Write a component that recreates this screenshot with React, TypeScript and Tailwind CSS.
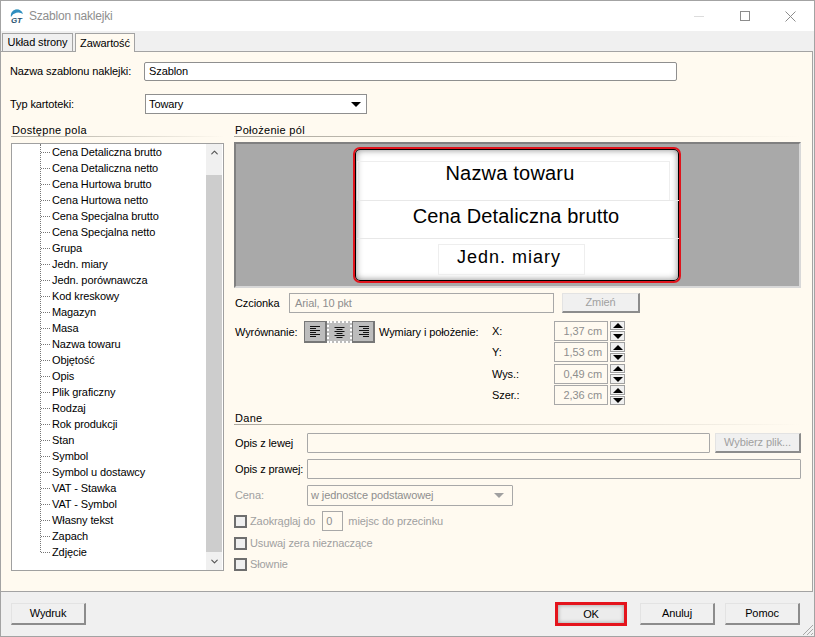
import { ChevronDown, ChevronUp } from 'lucide-react';

const FIELDS = [
  'Cena Detaliczna brutto', 'Cena Detaliczna netto', 'Cena Hurtowa brutto', 'Cena Hurtowa netto',
  'Cena Specjalna brutto', 'Cena Specjalna netto', 'Grupa', 'Jedn. miary', 'Jedn. porównawcza',
  'Kod kreskowy', 'Magazyn', 'Masa', 'Nazwa towaru', 'Objętość', 'Opis', 'Plik graficzny', 'Rodzaj',
  'Rok produkcji', 'Stan', 'Symbol', 'Symbol u dostawcy', 'VAT - Stawka', 'VAT - Symbol',
  'Własny tekst', 'Zapach', 'Zdjęcie',
];

const SIZES = [
  { label: 'X:', value: '1,37 cm' },
  { label: 'Y:', value: '1,53 cm' },
  { label: 'Wys.:', value: '0,49 cm' },
  { label: 'Szer.:', value: '2,36 cm' },
];

function Logo() {
  return (
    <svg width="16" height="16" viewBox="0 0 16 16" className="ml-[8px]">
      <path d="M2 9a6 6 0 0 1 12-3 8 8 0 0 0-12 3z" fill="#2f8fc0" />
      <path d="M3 4a6 6 0 0 1 8-2 7 7 0 0 0-8 2z" fill="#9cc" />
      <text x="2" y="15" fontSize="8" fontWeight="700" fontStyle="italic" fill="#24506e" fontFamily="Liberation Sans, sans-serif">GT</text>
    </svg>
  );
}

function BevelButton({ label, disabled, className }: { label: string; disabled?: boolean; className: string }) {
  return (
    <div
      className={`flex items-center justify-center bg-[#f0f0f0] border border-t-[#e3e3e3] border-l-[#e3e3e3] border-r-2 border-b-2 border-r-[#8c8c8c] border-b-[#8c8c8c] ${disabled ? 'text-[#a0a0a0]' : 'text-black'} ${className}`}
    >
      {label}
    </div>
  );
}

function Section({ title }: { title: string }) {
  return (
    <div>
      <div className="h-[12px] pl-[1px] leading-[12px] tracking-[0.3px] text-black">{title}</div>
      <div className="h-[1px] bg-gradient-to-r from-[#aaa69c] to-[#fffaf0]" />
    </div>
  );
}

function AlignIcon({ kind }: { kind: 'left' | 'center' | 'right' }) {
  const widths = [10, 6, 10, 6, 10, 6];
  return (
    <svg width="11" height="11" viewBox="0 0 11 11">
      {widths.map((w, i) => {
        const x = kind === 'left' ? 0 : kind === 'right' ? 11 - w : (11 - w) / 2;
        return <rect key={i} x={x} y={i * 2} width={w} height="1" fill="#111" />;
      })}
    </svg>
  );
}

function Spinner() {
  return (
    <div className="ml-[2px] w-[15px] h-[20px] flex flex-col gap-[1px] bg-white">
      <div className="h-[9.5px] flex-1 flex items-center justify-center bg-[#f0f0f0] border border-[#a0a0a0]">
        <div className="w-0 h-0 border-x-[5px] border-x-transparent border-b-[5px] border-b-black" />
      </div>
      <div className="h-[9.5px] flex-1 flex items-center justify-center bg-[#f0f0f0] border border-[#a0a0a0]">
        <div className="w-0 h-0 border-x-[5px] border-x-transparent border-t-[5px] border-t-black" />
      </div>
    </div>
  );
}

function Check({ label }: { label: string }) {
  return (
    <div className="flex items-center text-[#a0a0a0]">
      <div className="w-[13px] h-[13px] bg-[#efefef] border-2 border-[#6e6e6e]" />
      <span className="ml-[3px]">{label}</span>
    </div>
  );
}

export default function App() {
  return (
    <div
      className="w-[815px] h-[637px] flex flex-col bg-[#f0f0f0] border border-[#a3a3a3] overflow-hidden text-[11px] tracking-[-0.1px] text-black"
      style={{ fontFamily: '"Liberation Sans", Arial, sans-serif' }}
    >
      <div className="h-[30px] shrink-0 bg-white flex items-center">
        <Logo />
        <span className="ml-[4px] text-[12px] tracking-[-0.2px] text-[#8e8e8e]">Szablon naklejki</span>
        <div className="ml-auto flex items-center">
          <div className="w-[10px] h-[1px] bg-[#dcdcdc] mr-[36px]" />
          <div className="w-[10px] h-[10px] border border-[#8c8c8c] mr-[35px]" />
          <svg width="11" height="11" viewBox="0 0 11 11" className="mr-[18px]">
            <path d="M0.5 0.5l10 10M10.5 0.5l-10 10" stroke="#8c8c8c" strokeWidth="1" />
          </svg>
        </div>
      </div>

      <div className="h-[20px] shrink-0 flex items-end pl-[1px] gap-[2px]">
        <div className="h-[18px] w-[71px] flex items-center justify-center bg-[#f0f0f0] border border-b-0 border-[#a3a3a3]">Układ strony</div>
        <div className="relative z-10 -mb-[1px] h-[19px] w-[60px] flex items-center justify-center bg-[#fffaf0] border border-b-0 border-[#a3a3a3]">Zawartość</div>
      </div>

      <div className="h-[541px] shrink-0 mr-[1px] -ml-[1px] bg-[#fffaf0] border border-[#a3a3a3] flex flex-col">
        <div className="mt-[10px] h-[19px] flex items-center">
          <span className="ml-[9px] w-[134px]">Nazwa szablonu naklejki:</span>
          <div className="w-[533px] h-[19px] pl-[4px] flex items-center bg-white border border-[#8f8f8f] rounded-[2px]">Szablon</div>
        </div>

        <div className="mt-[13px] h-[20px] flex items-center">
          <span className="ml-[9px] w-[135px]">Typ kartoteki:</span>
          <div className="w-[222px] h-[20px] pl-[3px] pr-[5px] flex items-center justify-between bg-white border border-[#8f8f8f]">
            Towary
            <div className="w-0 h-0 border-x-[5px] border-x-transparent border-t-[5px] border-t-black" />
          </div>
        </div>

        <div className="mt-[10px] flex">
          <div className="ml-[10px] w-[213px]">
            <Section title="Dostępne pola" />
            <div className="mt-[6px] h-[428px] flex bg-white border border-[#a0a0a0]">
              <div className="flex-1 relative">
                <div className="absolute left-[28px] top-0 h-[408px] border-l border-dotted border-[#777]" />
                {FIELDS.map((f) => (
                  <div key={f} className="h-[16px] flex items-center pl-[29px]">
                    <div className="w-[9px] border-t border-dotted border-[#777]" />
                    <span className="ml-[2px] whitespace-nowrap">{f}</span>
                  </div>
                ))}
              </div>
              <div className="w-[16px] mr-[1px] flex flex-col bg-[#f0f0f0]">
                <div className="h-[16px] flex items-center justify-center"><ChevronUp size={11} strokeWidth={2.5} color="#555" /></div>
                <div className="mt-[15px] h-[377px] bg-[#cdcdcd]" />
                <div className="flex-1 flex items-center justify-center"><ChevronDown size={11} strokeWidth={2.5} color="#555" /></div>
              </div>
            </div>
          </div>

          <div className="ml-[10px] w-[567px]">
            <Section title="Położenie pól" />
            <div className="mt-[5px] h-[146px] relative bg-[#a9a9a9] border-2 border-[#808080] border-b-[#d8d8d8] border-r-[#d8d8d8]">
              <div className="absolute left-[117px] top-[3px] w-[328px] h-[136px] bg-white rounded-[7px] border-2 border-[#e0141c] shadow-[inset_0_0_0_1px_#000,inset_2px_2px_6px_rgba(0,0,0,0.3),inset_-2px_-2px_6px_rgba(0,0,0,0.3)]">
                <div className="absolute left-[2px] top-[12px] w-[313px] h-[40px] border border-[#eeeeee] flex justify-center pr-[7px] text-[20px] tracking-[0.2px] leading-[22px]">Nazwa towaru</div>
                <div className="absolute left-[2px] top-[51px] w-[322px] h-[1px] bg-[#e8e8e8]" />
                <div className="absolute left-[2px] top-[54px] w-[322px] h-[34px] flex justify-center pr-[4px] text-[20px] tracking-[0.15px] leading-[26px]">Cena Detaliczna brutto</div>
                <div className="absolute left-[2px] top-[89px] w-[322px] h-[1px] bg-[#e8e8e8]" />
                <div className="absolute left-[83px] top-[95px] w-[147px] h-[31px] border border-[#eeeeee] flex justify-center pr-[5px] text-[18px] leading-[24px] tracking-[1px]">Jedn. miary</div>
              </div>
            </div>

            <div className="mt-[5px] h-[20px] flex items-center">
              <span className="ml-[1px] w-[54px]">Czcionka</span>
              <div className="w-[265px] h-[20px] pl-[5px] flex items-center border border-[#a8a8a8] text-[#8e8e8e]">Arial, 10 pkt</div>
              <BevelButton label="Zmień" disabled className="ml-[8px] w-[78px] h-[20px]" />
            </div>

            <div className="mt-[8px] flex">
              <span className="ml-[1px] w-[69px] pt-[3px]">Wyrównanie:</span>
              <div className="w-[71px] h-[22px] flex">
                <div className="w-[23px] flex items-center justify-center bg-[#bdbdbd] border border-[#777] border-b-2 border-r-2"><AlignIcon kind="left" /></div>
                <div className="w-[25px] flex items-center justify-center bg-[#bdbdbd] border-2 border-white border-dotted"><AlignIcon kind="center" /></div>
                <div className="w-[23px] flex items-center justify-center bg-[#bdbdbd] border border-[#777] border-b-2 border-r-2"><AlignIcon kind="right" /></div>
              </div>
              <span className="ml-[4px] w-[113px] pt-[3px]">Wymiary i położenie:</span>
              <div className="flex flex-col -mt-[1px]">
                {SIZES.map((s) => (
                  <div key={s.label} className="h-[21.5px] flex items-center">
                    <span className="w-[62px]">{s.label}</span>
                    <div className="w-[54px] h-[20px] pr-[5px] flex items-center justify-end border border-[#a8a8a8] text-[#8e8e8e]">{s.value}</div>
                    <Spinner />
                  </div>
                ))}
              </div>
            </div>

            <div className="mt-[6px]"><Section title="Dane" /></div>

            <div className="mt-[8px] h-[20px] flex items-center">
              <span className="ml-[1px] w-[72px]">Opis z lewej</span>
              <div className="w-[403px] h-[20px] border border-[#a8a8a8] rounded-[1px]" />
              <BevelButton label="Wybierz plik..." disabled className="ml-[5px] w-[86px] h-[20px]" />
            </div>
            <div className="mt-[6px] h-[20px] flex items-center">
              <span className="ml-[1px] w-[72px]">Opis z prawej:</span>
              <div className="w-[494px] h-[20px] border border-[#a8a8a8] rounded-[1px]" />
            </div>
            <div className="mt-[6px] h-[21px] flex items-center">
              <span className="ml-[1px] w-[72px] text-[#a0a0a0]">Cena:</span>
              <div className="w-[206px] h-[21px] pl-[3px] pr-[8px] flex items-center justify-between border border-[#a8a8a8] text-[#8e8e8e] rounded-[1px]">
                w jednostce podstawowej
                <div className="w-0 h-0 border-x-[5px] border-x-transparent border-t-[5px] border-t-[#a0a0a0]" />
              </div>
            </div>

            <div className="mt-[5px] h-[20px] flex items-center text-[#a0a0a0]">
              <Check label="Zaokrąglaj do" />
              <div className="ml-[7px] w-[21px] h-[20px] pl-[3px] flex items-center border border-[#a8a8a8] text-[#8e8e8e]">0</div>
              <span className="ml-[5px]">miejsc do przecinku</span>
            </div>
            <div className="mt-[4px] h-[17px] flex items-center"><Check label="Usuwaj zera nieznaczące" /></div>
            <div className="mt-[4px] h-[17px] flex items-center"><Check label="Słownie" /></div>
          </div>
        </div>
      </div>

      <div className="relative flex-1 flex items-start pt-[11px]">
        <BevelButton label="Wydruk" className="ml-[10px] w-[75px] h-[22px]" />
        <div className="ml-[469px] -mt-[1px] w-[72px] h-[24px] flex items-center justify-center bg-[#ececec] border-[3px] border-[#e4141c] shadow-[inset_0_0_4px_rgba(0,0,0,0.35)]">OK</div>
        <BevelButton label="Anuluj" className="ml-[13px] w-[75px] h-[22px]" />
        <BevelButton label="Pomoc" className="ml-[10px] w-[75px] h-[22px]" />
        <svg width="12" height="12" viewBox="0 0 12 12" className="absolute right-0 bottom-0">
          <path d="M11 1L1 11M11 5L5 11M11 9L9 11" stroke="#a8a8a8" strokeWidth="1" />
        </svg>
      </div>
    </div>
  );
}
